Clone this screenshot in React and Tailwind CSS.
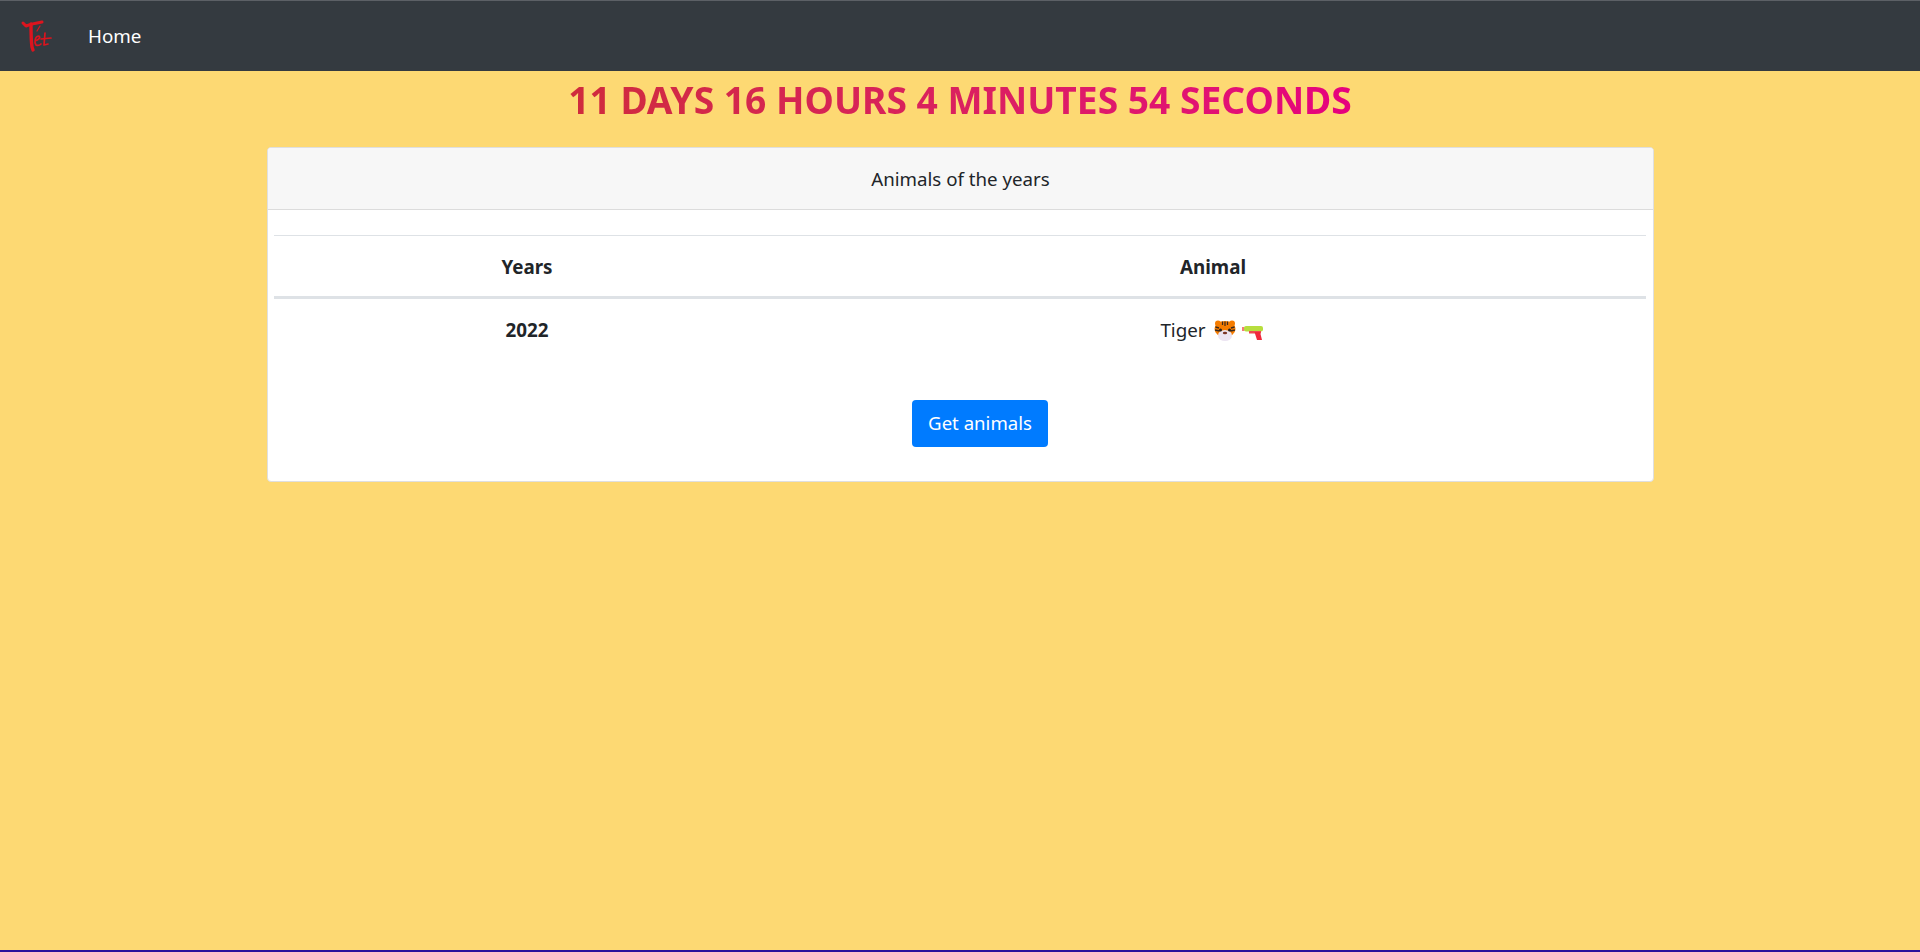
function Logo() {
  return (
    <svg width="34" height="36" viewBox="0 0 34 36" fill="none" className="block shrink-0" stroke="#dd141e" strokeLinecap="round" strokeLinejoin="round">
      <path d="M3 5 L6 8 C11 6 16 5 22 4" strokeWidth="3" />
      <path d="M11 6 C11 14 11 22 12 29 L13 32" strokeWidth="3.4" />
      <path d="M17 13 L20 8" strokeWidth="1.2" />
      <path d="M15 23 C18 22 21 20 19 18 C15 18 14 24 16 27 C18 28 20 27 21 26" strokeWidth="1.7" />
      <path d="M25 15 L24 27 L28 26" strokeWidth="1.7" />
      <path d="M21 21 L31 20" strokeWidth="1.7" />
    </svg>
  );
}

function Tiger() {
  return (
    <svg width="22" height="21" viewBox="0 0 22 21" className="block">
      <circle cx="4" cy="3.5" r="3" fill="#f57c00" />
      <circle cx="18" cy="3.5" r="3" fill="#f57c00" />
      <ellipse cx="11" cy="9" rx="10.5" ry="8" fill="#f57c00" />
      <path d="M1 10 L5.5 11 M21 10 L16.5 11 M1.5 7 L5 8 M20.5 7 L17 8" stroke="#3a2a20" strokeWidth="1.4" />
      <path d="M8.5 1.5 L8.5 5 M13.5 1.5 L13.5 5 M11 1.5 L11 6" stroke="#3a2a20" strokeWidth="1.2" />
      <ellipse cx="11" cy="15.5" rx="7" ry="5.5" fill="#ece4f2" />
      <circle cx="6.5" cy="10" r="1.5" fill="#222" />
      <circle cx="15.5" cy="10" r="1.5" fill="#222" />
      <ellipse cx="11" cy="13" rx="2.2" ry="1.3" fill="#7a3425" />
    </svg>
  );
}

function Pistol() {
  return (
    <svg width="22" height="14" viewBox="0 0 22 14" className="block">
      <rect x="0" y="1" width="2.5" height="4" fill="#f47a7a" />
      <rect x="2" y="0" width="19" height="5.5" rx="2" fill="#b7de3e" />
      <rect x="7" y="5" width="12" height="2.5" fill="#ee4a50" />
      <path d="M12.5 6 H18 L20 14 H15 Z" fill="#f0283c" />
    </svg>
  );
}

export default function App() {
  return (
    <div className="min-h-[952px] flex flex-col bg-[#fdd973] border-b-2 border-[#2a0f9c] text-[#212529] font-['Noto_Sans',sans-serif]">
      <nav className="h-[71px] bg-[#343a40] border-t border-[#5c6066] flex items-center pl-[20px]">
        <Logo />
        <a className="ml-[34px] pt-[1px] text-[18.8px] text-white">Home</a>
      </nav>
      <h1 className="mt-[7px] text-center text-[37.2px] leading-[44px] font-bold">
        <span className="bg-gradient-to-r from-[#cf2b3c] to-[#e6007e] bg-clip-text text-transparent">
          11 DAYS 16 HOURS 4 MINUTES 54 SECONDS
        </span>
      </h1>
      <div className="mt-[25px] ml-[267px] w-[1387px] h-[335px] bg-white border border-[#dfdfdf] rounded-[4px] overflow-hidden">
        <div className="h-[62px] bg-[#f7f7f7] border-b border-[#dcdcdc] flex items-center justify-center text-[18.7px] pt-[2px]">
          Animals of the years
        </div>
        <div className="pl-[6px] pr-[7px] pt-[25px]">
          <table className="w-full border-collapse text-center text-[18.8px]">
            <thead>
              <tr className="h-[62px] border-t border-b-[3px] border-[#dee2e6]">
                <th className="w-[506px] font-bold pt-[2px]">Years</th>
                <th className="font-bold pt-[2px]">Animal</th>
              </tr>
            </thead>
            <tbody>
              <tr className="h-[64px]">
                <th className="font-bold">2022</th>
                <td>
                  <span className="inline-flex items-center pr-[2px]">
                    <span className="mr-[8px]">Tiger</span>
                    <span className="mr-[6px]"><Tiger /></span>
                    <span className="mt-[5px]"><Pistol /></span>
                  </span>
                </td>
              </tr>
            </tbody>
          </table>
          <div className="mt-[38px] flex justify-center pl-[40px]">
            <button className="w-[136px] h-[47px] rounded-[4px] bg-[#007bff] text-white text-[18.6px]">Get animals</button>
          </div>
        </div>
      </div>
    </div>
  );
}
